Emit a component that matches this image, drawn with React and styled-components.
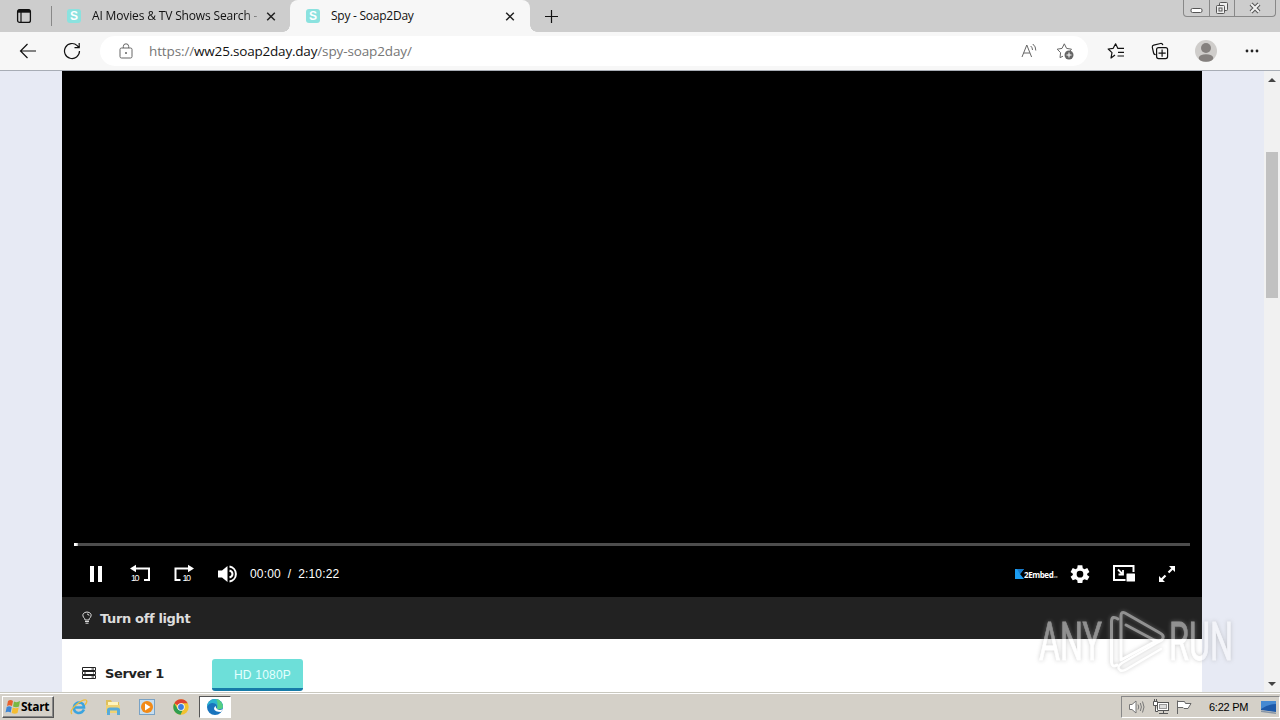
import React from 'react'
import styled, { createGlobalStyle } from 'styled-components'


const Favicon = () => (
  <FavBox>S</FavBox>
)

const CloseIcon = () => (
  <svg width="10" height="10" viewBox="0 0 10 10">
    <path d="M1.200 1.700L8.800 9.300M8.800 1.700L1.200 9.300" stroke="#222" strokeWidth="1.5" />
  </svg>
)

const Tabs = () => {
  return (
    <TabStrip>
      <TabMenu>
        <svg width="16" height="16" viewBox="0 0 16 16" fill="none" stroke="#111">
          <rect x="1.6" y="1.6" width="12.8" height="12.8" rx="2" strokeWidth="1.3" />
          <path d="M2 3.2H14" strokeWidth="3" />
          <path d="M5 4V14" strokeWidth="1.2" />
        </svg>
      </TabMenu>
      <Tab>
        <Favicon />
        <TabTitle $fade $space="-0.15px">AI Movies &amp; TV Shows Search -</TabTitle>
        <CloseIcon />
      </Tab>
      <Tab $active>
        <Favicon />
        <TabTitle $space="-0.25px">Spy - Soap2Day</TabTitle>
        <CloseIcon />
      </Tab>
      <NewTab>
        <svg width="15" height="15" viewBox="0 0 15 15">
          <path d="M7.5 1V14M1 7.5H14" stroke="#111" strokeWidth="1.2" />
        </svg>
      </NewTab>
      <WindowButtons>
        <WindowButton $width="25px">
          <svg width="13" height="16" viewBox="0 0 13 16">
            <rect x="1" y="8.500" width="11" height="4" rx="1.5" fill="#fff" stroke="#555" />
          </svg>
        </WindowButton>
        <WindowButton $width="25px">
          <svg width="14" height="16" viewBox="0 0 14 16" fill="#eee" stroke="#555">
            <rect x="4.5" y="2.5" width="8" height="8" rx="1" />
            <rect x="1.5" y="5.5" width="8" height="8" rx="1" />
            <rect x="4" y="8" width="3" height="3" />
          </svg>
        </WindowButton>
        <WindowButton $width="41px">
          <svg width="14" height="16" viewBox="0 0 14 16">
            <path d="M3 4L11 12M11 4L3 12" stroke="#555" strokeWidth="4" />
            <path d="M3 4L11 12M11 4L3 12" stroke="#f2f2f2" strokeWidth="2" />
          </svg>
        </WindowButton>
      </WindowButtons>
    </TabStrip>
  )
}

const Toolbar = () => {
  return (
    <ToolbarRow>
      <NavIcons>
        <svg width="18" height="18" viewBox="0 0 18 18" fill="none" stroke="#111" strokeWidth="1.2">
          <path d="M17 9H1.5M8.5 2L1.5 9L8.5 16" />
        </svg>
        <svg width="18" height="18" viewBox="0 0 18 18" fill="none" stroke="#111" strokeWidth="1.2">
          <path d="M16.5 9A7.5 7.5 0 1 1 14.2 3.6L16 5.5M16.2 1V5.7H11.5" />
        </svg>
      </NavIcons>
      <Address>
        <svg width="14" height="16" viewBox="0 0 14 16" fill="none" stroke="#666">
          <rect x="1" y="5" width="12" height="10" rx="1.5" />
          <path d="M4.3 5V3.5A2.7 2.7 0 0 1 9.7 3.5V5" />
          <circle cx="7" cy="10" r="0.6" fill="#666" />
        </svg>
        <Url>https://<b>ww25.soap2day.day</b>/spy-soap2day/</Url>
        <svg width="18" height="18" viewBox="0 0 18 18" fill="none" stroke="#666">
          <path d="M2 15L6.8 3L11.6 15M3.7 11H9.9M10.7 4Q12.5 5.5 12.5 8M12.8 2Q16 4.5 15.8 8.5" />
        </svg>
        <svg width="18" height="18" viewBox="0 0 18 18" fill="none" stroke="#666">
          <path d="M7 14.2L4 15.6L4.6 10.7L1.2 7.2L6 6.4L8.3 1.8L10.6 6.4L15.5 7.2L14 9" strokeLinejoin="round" />
          <circle cx="13" cy="13" r="4.500" fill="#666" stroke="none" />
          <path d="M13 10.500V15.500M10.500 13H15.500" stroke="#fff" />
        </svg>
      </Address>
      <ToolIcons>
        <svg width="18" height="18" viewBox="0 0 18 18" fill="none" stroke="#111" strokeWidth="1.2">
          <path d="M8 13L4 16L5 10.6L1.2 7L6.2 6.3L8.6 1.8L10.9 6.4H17M11 10.3H17M10.5 14H17" strokeLinejoin="round" />
        </svg>
        <svg width="18" height="18" viewBox="0 0 18 18" fill="none" stroke="#111" strokeWidth="1.2">
          <path d="M4.7 12.5Q3 12.8 2.6 11L1.3 5.3Q1 3.6 2.7 3.2L9.5 1.5Q11.3 1.2 11.9 3.2" />
          <rect x="5.6" y="5.6" width="11" height="11" rx="2" />
          <path d="M11.1 7.5V14.7M7.5 11.1H14.7" />
        </svg>
        <svg width="22" height="22" viewBox="0 0 22 22">
          <circle cx="11" cy="11" r="11" fill="#cfcdcb" />
          <circle cx="11" cy="8" r="5" fill="#84807e" />
          <ellipse cx="11" cy="18" rx="7.3" ry="3.8" fill="#84807e" />
        </svg>
        <Dots width="14" height="4" viewBox="0 0 14 4">
          <circle cx="2" cy="2" r="1.400" />
          <circle cx="7" cy="2" r="1.400" />
          <circle cx="12" cy="2" r="1.400" />
        </Dots>
      </ToolIcons>
    </ToolbarRow>
  )
}

const Player = () => {
  return (
    <Video>
      <Progress />
      <Controls>
        <LeftControls>
          <svg width="20" height="20" viewBox="0 0 20 20" fill="#fff">
            <path d="M4 2H8V18H4zM12 2H16V18H12z" />
          </svg>
          <svg width="20" height="20" viewBox="0 0 20 20">
            <path d="M4 4.500H19V16H14" fill="none" stroke="#fff" strokeWidth="2" />
            <path d="M0 4.500L6 .8V8.2z" fill="#fff" />
            <SkipText x="1" y="16.500" textLength="8.500">10</SkipText>
          </svg>
          <svg width="20" height="20" viewBox="0 0 20 20">
            <path d="M16 4.500H1.500V16H6.500" fill="none" stroke="#fff" strokeWidth="2" />
            <path d="M20 4.500L14 .8V8.2z" fill="#fff" />
            <SkipText x="8.5" y="16.500" textLength="8.500">10</SkipText>
          </svg>
          <svg width="20" height="20" viewBox="0 0 20 20">
            <path d="M0 6.5H4L9.500 2V18L4 13.5H0z" fill="#fff" />
            <path d="M11.5 6.500Q14.500 7.5 14.500 10T11.5 13.500M11.5 2.5A7.600 7.600 0 0 1 11.5 17.5" fill="none" stroke="#fff" strokeWidth="2" />
          </svg>
        </LeftControls>
        <Time>00:00&nbsp; /&nbsp; 2:10:22</Time>
        <Brand>
          <svg width="9" height="10" viewBox="0 0 9 10">
            <path d="M0 0H9L5 5L9 10H0z" fill="#1b9cf0" />
            <path d="M2 0H9L5 5z" fill="#1779c9" />
          </svg>
          <span>2Embed<small>.cc</small></span>
        </Brand>
        <RightControls>
          <svg width="20" height="20" viewBox="0 0 24 24" fill="#fff">
            <path fillRule="evenodd" d="M9.2 1.5H14.8L15.3 5L17.4 6.2L20.7 4.9L23.3 9.5L20.6 11.7V13.1L23.3 15.2L20.7 19.6L17.4 18.4L15.3 19.6L14.8 22.8H9.2L8.7 19.6L6.6 18.4L3.3 19.6L0.7 15.2L3.4 13.1V11.7L0.7 9.5L3.3 4.9L6.6 6.2L8.7 5zM12 8.2A4 4 0 1 0 12 16.2A4 4 0 1 0 12 8.2z" />
          </svg>
          <svg width="22" height="18" viewBox="0 0 22 18" fill="none" stroke="#fff">
            <path d="M20.500 7V1H1V15H12.500" strokeWidth="2" />
            <path d="M5 4.500L9.500 9M10 5V9.500H5.5" strokeWidth="1.8" />
            <rect x="13.500" y="8.500" width="8.500" height="8" rx=".5" fill="#fff" stroke="none" />
          </svg>
          <svg width="18" height="18" viewBox="0 0 18 18" fill="#fff" stroke="#fff">
            <path d="M10.500 7.500L15 3M7.500 10.500L3 15" strokeWidth="2.200" />
            <path d="M11 1H17V7zM1 11V17H7z" stroke="none" />
          </svg>
        </RightControls>
      </Controls>
    </Video>
  )
}

const Watermark = () => (
  <WatermarkSvg width="216" height="72" viewBox="0 0 216 72">
    <text x="5" y="54" textLength="63" lengthAdjust="spacingAndGlyphs">ANY</text>
    <text x="135" y="54" textLength="64" lengthAdjust="spacingAndGlyphs">RUN</text>
    <g fill="none" stroke="#fff" strokeWidth="3" strokeLinejoin="round" strokeLinecap="round">
      <path d="M84 13Q78 9 77.500 15V56Q78 62 83 59" />
      <path d="M92 19L120 34Q127 37 129 32Q130 29 126 27L91 7Q87 5 87 10V54L122 35" />
      <path d="M128 34L88 57Q82 61 86 64Q88 66 93 63L127 43" strokeWidth="2.500" />
    </g>
  </WatermarkSvg>
)

const Taskbar = () => {
  return (
    <TaskRow>
      <StartButton>
        <svg width="16" height="16" viewBox="0 0 16 16">
          <path d="M3 2Q5.500 0 8 2L7 7Q4.500 5.500 2 7z" fill="#e8602c" />
          <path d="M9 2.500Q12 4 15 2L14 7.500Q11 9 8 7.500z" fill="#79b843" />
          <path d="M1.700 8Q4 6.500 6.700 8L5.700 13.500Q3 12 .5 13.500z" fill="#3e86d6" />
          <path d="M7.700 8.500Q11 10 13.700 8.500L12.500 14Q10 15.500 6.700 14z" fill="#f5bd31" />
        </svg>
        Start
      </StartButton>
      <Launchers>
        <Launcher>
          <svg width="18" height="18" viewBox="0 0 18 18" fill="none">
            <path d="M14 11.500Q12 15.500 8 15Q3.500 14 4 9Q5 4.500 9.500 4.500Q14 5 14 9.500H5" stroke="#3ba4df" strokeWidth="2.600" />
            <path d="M2 16Q-1 13 6 7T16 2Q18 3 15 7" stroke="#edbd3e" strokeWidth="1.300" />
          </svg>
        </Launcher>
        <Launcher>
          <svg width="18" height="18" viewBox="0 0 18 18">
            <path d="M2 2H7L8 4H15V15H2z" fill="#dfc05c" />
            <path d="M4 4H14V9H4z" fill="#fff5bd" />
            <path d="M2 7H16V15H2z" fill="#efd274" />
            <path d="M3 17V12Q3 9.500 6 9.500H13Q16 9.500 16 12V17H13V12.500H6V17z" fill="#58abd9" />
          </svg>
        </Launcher>
        <Launcher>
          <svg width="18" height="18" viewBox="0 0 18 18">
            <rect x="1.500" y="1.500" width="15" height="15" fill="#c7def0" stroke="#79a2c5" />
            <circle cx="9" cy="9" r="6" fill="#f28a17" />
            <path d="M7 5.500L12.500 9L7 12.500z" fill="#fff" />
          </svg>
        </Launcher>
        <Launcher>
          <svg width="18" height="18" viewBox="0 0 18 18">
            <circle cx="9" cy="9" r="7.700" fill="#f2c230" />
            <path d="M9 9L2.300 5.200A7.700 7.700 0 0 1 15.700 5.200H9z" fill="#dd4234" />
            <path d="M2.300 5.200L5.700 11L10.500 12.500L8.500 16.700A7.700 7.700 0 0 1 2.300 5.200z" fill="#2f9e50" />
            <circle cx="9" cy="9" r="3.700" fill="#fff" />
            <circle cx="9" cy="9" r="2.900" fill="#3d7de0" />
          </svg>
        </Launcher>
        <Launcher $active>
          <svg width="18" height="18" viewBox="0 0 18 18">
            <circle cx="9" cy="9" r="8" fill="#1974bd" />
            <path d="M1 9A8 8 0 0 1 17 9Q16.500 12 11 11Q12 5 6.500 5Q3 5 1 9z" fill="#2bb4d0" />
            <path d="M10 1.100A8 8 0 0 1 17 9Q16 12 11 11Q12.500 5 10 1.100z" fill="#55ce83" />
            <path d="M10 8Q9 9 11 11T17 11L15 14Q9 14 8 11Q8 8.500 10 8z" fill="#fff" />
          </svg>
        </Launcher>
      </Launchers>
      <Tray>
        <svg width="18" height="16" viewBox="0 0 18 16" fill="#fff" stroke="#777">
          <path d="M1.500 5.500H4L8 2V14L4 10.500H1.500z" />
          <path d="M10 5.500Q11.500 8 10 10.500M12.300 4Q14.500 8 12.300 12M14.500 2.500Q17.500 8 14.500 13.500" fill="none" />
        </svg>
        <svg width="16" height="16" viewBox="0 0 16 16" fill="#fff" stroke="#555">
          <rect x="4.500" y="3.500" width="11" height="8" />
          <rect x="6.500" y="5.500" width="7" height="4" fill="#ddd" stroke="#999" />
          <path d="M6 14.500H15M10.500 12V14M.5 2.500H4.500V6.500H.5zM1.500 0V2M3.500 0V2M2.500 7V12.500H5" />
        </svg>
        <svg width="18" height="16" viewBox="0 0 18 16" fill="#fff" stroke="#666">
          <path d="M1.500 15V1.500M2 2.500H8.500L9.500 4.500H15L12 9.500H8L7 8.500H2" />
        </svg>
        <Clock>6:22 PM</Clock>
        <svg width="17" height="14" viewBox="0 0 17 14">
          <path d="M1 1H16V12L1 10z" fill="#1d59a9" />
          <path d="M1 1H16V4Q8 4 1 9z" fill="#4589d2" />
          <path d="M1 10.500L16 12.500V14L1 12z" fill="#8795a5" />
        </svg>
      </Tray>
    </TaskRow>
  )
}

const App = () => {
  return (
    <Screen>
      <GlobalStyle />
      <Tabs />
      <Toolbar />
      <Viewport>
        <Content>
          <Player />
          <LightBar>
            <svg width="10" height="14" viewBox="0 0 10 14" fill="none" stroke="#ddd">
              <path d="M3 9Q3 7.500 1.700 6.500Q.5 5 1 3.300Q2 1 5 1T9 3.300Q9.500 5 8.300 6.500Q7 7.500 7 9zM3 10.500H7M3.500 12.200H6.500M5 3Q7 3 7 4.700" />
            </svg>
            Turn off light
          </LightBar>
          <ServerRow>
            <ServerName>
              <svg width="14" height="12" viewBox="0 0 14 12" fill="none" stroke="#222">
                <path d="M.5 .5H13.500V3.500H.5zM.5 4.500H13.500V7.500H.5zM.5 8.500H13.500V11.500H.5zM9.500 2H12M2 6H4M11 6H12M9.500 10H12" />
              </svg>
              Server 1
            </ServerName>
            <QualityButton>HD 1080P</QualityButton>
          </ServerRow>
        </Content>
        <Scrollbar>
          <Arrow $up />
          <Thumb />
          <Arrow />
        </Scrollbar>
      </Viewport>
      <Taskbar />
      <Watermark />
    </Screen>
  )
}

const GlobalStyle = createGlobalStyle`
*{
  box-sizing:border-box;
}
body{
  margin:0;
  overflow:hidden;
}
svg{
  display:block;
  flex-shrink:0;
}
`

const Screen = styled.div`
position:relative;
display:flex;
flex-direction:column;
width:1280px;
height:720px;
overflow:hidden;
font-family:'Liberation Sans', sans-serif;
`

const TabStrip = styled.div`
display:flex;
height:32px;
background:#cdcdcd;
`

const TabMenu = styled.div`
display:flex;
align-items:center;
width:52px;
height:20px;
margin-top:6px;
padding-left:16px;
border-right:1px solid #888;
`

const Tab = styled.div`
position:relative;
display:flex;
align-items:center;
width:${props => props.$active ? '240px' : '238px'};
padding:0 ${props => props.$active ? '15px 0 16px' : '14px 0 15px'};
background:${props => props.$active ? '#f7f7f7' : 'transparent'};
border-radius:8px 8px 0 0;

&:before, &:after{
  content:"";
  display:${props => props.$active ? 'block' : 'none'};
  position:absolute;
  bottom:0;
  width:7px;
  height:7px;
}
&:before{
  left:-7px;
  background:radial-gradient(circle at 0 0, transparent 6.5px, #f7f7f7 7px);
}
&:after{
  right:-7px;
  background:radial-gradient(circle at 100% 0, transparent 6.5px, #f7f7f7 7px);
}
`

const FavBox = styled.span`
width:14px;
height:14px;
margin-right:11px;
border-radius:3px;
background:#8be2df;
color:#fff;
font-size:12px;
font-weight:700;
line-height:14px;
text-align:center;
`

const TabTitle = styled.span`
flex:1;
overflow:hidden;
white-space:nowrap;
font-family:'Open Sans', sans-serif;
font-size:12px;
line-height:18px;
letter-spacing:${props => props.$space};
color:#111;
${props => props.$fade && 'mask-image:linear-gradient(90deg, #000 152px, transparent 172px);'}
`

const NewTab = styled.div`
display:flex;
align-items:center;
padding-left:14px;
`

const WindowButtons = styled.div`
display:flex;
height:17px;
margin-left:auto;
margin-right:4px;
border:1px solid #888;
border-top:0;
border-radius:0 0 4px 4px;
`

const WindowButton = styled.div`
display:flex;
justify-content:center;
width:${props => props.$width};
border-left:1px solid #888;

&:first-child{
  border-left:0;
}
`

const ToolbarRow = styled.div`
display:flex;
align-items:center;
height:39px;
background:#f7f7f7;
border-bottom:1px solid #a8adb5;
`

const NavIcons = styled.div`
display:flex;
gap:26px;
width:100px;
padding-left:19px;
`

const Address = styled.div`
display:flex;
align-items:center;
gap:18px;
width:988px;
height:30px;
padding:0 14px 0 19px;
border-radius:15px;
background:#fff;
`

const Url = styled.span`
flex:1;
margin-left:-2px;
font-family:'Open Sans', sans-serif;
font-size:13.5px;
letter-spacing:-0.12px;
color:#767676;

b{
  font-weight:400;
  letter-spacing:-0.2px;
  color:#111;
}
`

const ToolIcons = styled.div`
display:flex;
align-items:center;
gap:26px;
margin-left:19px;
`

const Dots = styled.svg`
margin-left:2px;
fill:#222;
`

const Viewport = styled.div`
display:flex;
height:621px;
background:#e7eaf4;
`

const Content = styled.div`
width:1140px;
margin:0 62px;
background:#fff;
`

const Video = styled.div`
display:flex;
flex-direction:column;
justify-content:flex-end;
height:526px;
padding:0 12px;
background:#000;
`

const Progress = styled.div`
height:3px;
background:linear-gradient(90deg, #fff 2px, #aaa 4px, #4d4d4d 4px);
`

const Controls = styled.div`
display:flex;
align-items:center;
height:44px;
margin-bottom:1px;
margin-top:6px;
`

const LeftControls = styled.div`
display:flex;
gap:24px;
padding-left:12px;
`

const SkipText = styled.text`
fill:#fff;
font-family:'Liberation Sans', sans-serif;
font-size:9px;
`

const Time = styled.span`
margin-left:12px;
color:#fff;
font-size:12px;
letter-spacing:0.15px;
white-space:nowrap;
`

const Brand = styled.div`
display:flex;
align-items:center;
margin-left:auto;
width:43px;
color:#fff;
font-family:'Open Sans', sans-serif;
font-size:8px;
font-weight:700;
letter-spacing:-0.4px;
white-space:nowrap;

small{
  font-size:4px;
  color:#aaa;
}
`

const RightControls = styled.div`
display:flex;
align-items:center;
gap:23px;
padding:0 13px 0 12px;
margin-right:1px;
margin-top:-1px;
`

const LightBar = styled.div`
display:flex;
align-items:center;
gap:8px;
height:42px;
padding-left:20px;
background:#222;
color:#ddd;
font-family:'DejaVu Sans', sans-serif;
font-size:13px;
font-weight:700;
letter-spacing:-0.36px;
`

const ServerRow = styled.div`
display:flex;
padding-top:20px;
padding-left:20px;
`

const ServerName = styled.div`
display:flex;
align-items:center;
gap:9px;
width:130px;
height:28px;
color:#222;
font-family:'DejaVu Sans', sans-serif;
font-size:13px;
font-weight:700;
letter-spacing:-0.36px;
`

const QualityButton = styled.div`
width:91px;
height:32px;
padding-left:22px;
border-bottom:3px solid #177ba8;
border-radius:3px;
background:#6ddfd9;
color:#e5ffff;
font-size:12px;
letter-spacing:0.2px;
line-height:32px;
white-space:nowrap;
`

const Scrollbar = styled.div`
display:flex;
flex-direction:column;
align-items:center;
width:16px;
background:#f1f1f1;
padding:7px 1px 6px 0;
`

const Arrow = styled.div`
border-left:4px solid transparent;
border-right:4px solid transparent;
${props => props.$up ? 'border-bottom:4px solid #444;' : 'border-top:4px solid #444; margin-top:auto;'}
`

const Thumb = styled.div`
width:12px;
height:146px;
margin-top:70px;
background:#c1c1c1;
`

const TaskRow = styled.div`
display:flex;
align-items:center;
height:28px;
padding:1px 0 1px 2px;
border-top:1px solid #c9c8bf;
box-shadow:inset 0 1px #fff;
background:#d4d0c8;
`

const StartButton = styled.div`
display:flex;
align-items:center;
width:52px;
height:22px;
padding-left:2px;
border:1px solid;
border-color:#fff #555 #555 #fff;
box-shadow:inset -1px -1px #888;
color:#000;
font-family:'Open Sans', sans-serif;
font-size:12px;
font-weight:700;
letter-spacing:-0.3px;
`

const Launchers = styled.div`
display:flex;
gap:2px;
margin-left:9px;
`

const Launcher = styled.div`
display:flex;
align-items:center;
justify-content:center;
width:32px;
height:22px;
border:1px solid;
border-color:${props => props.$active ? '#555 #fff #fff #555' : 'transparent'};
background:${props => props.$active ? '#fff' : 'transparent'};
`

const Tray = styled.div`
display:flex;
align-items:center;
gap:7px;
width:159px;
height:22px;
margin-left:auto;
padding-left:6px;
border:1px solid;
border-color:#888 #fff #fff #888;
`

const Clock = styled.span`
width:41px;
margin:0 3px 0 8px;
color:#000;
font-family:'Liberation Sans', sans-serif;
font-size:11px;
letter-spacing:-0.25px;
white-space:nowrap;
`

const WatermarkSvg = styled.svg`
position:absolute;
left:1034px;
top:606px;
opacity:0.5;
filter:drop-shadow(0 0 2px #999);

text{
  fill:#fff;
  stroke:#fff;
  stroke-width:0.8px;
  font-family:Roboto, sans-serif;
  font-size:53px;
}
`


export default App
